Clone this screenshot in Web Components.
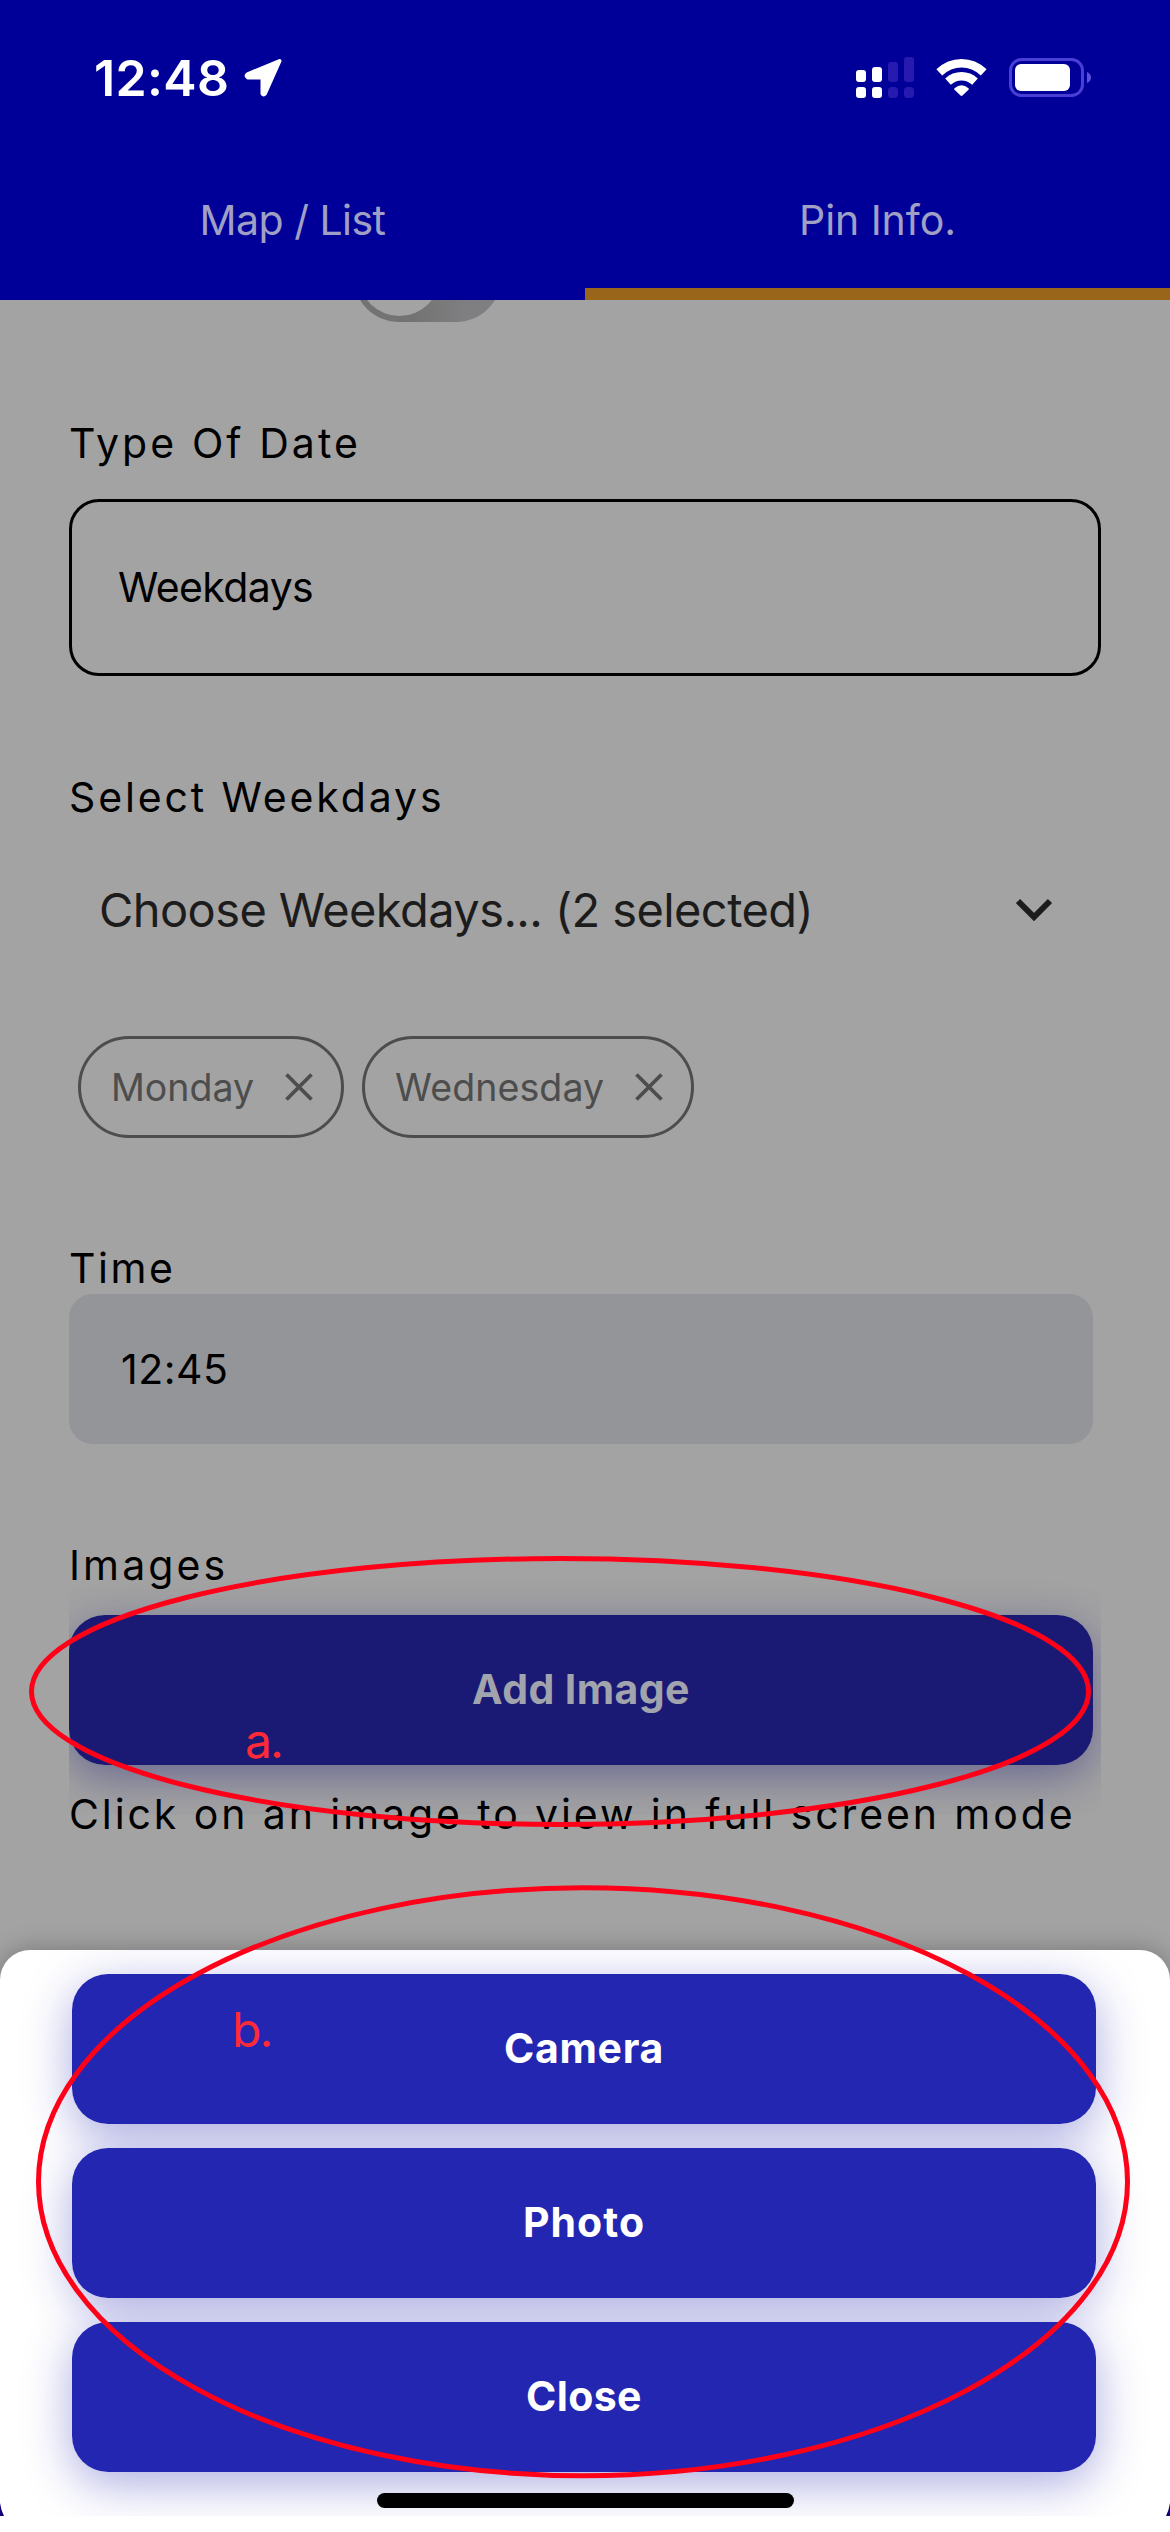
<!DOCTYPE html>
<html lang="en">
<head>
<meta charset="utf-8">
<title>Pin Info</title>
<style>
  html, body { margin: 0; padding: 0; }
  body { width: 1170px; height: 2532px; overflow: hidden; background: #fff; font-family: Inter, "Liberation Sans", sans-serif; }
</style>
</head>
<body>
<phone-screen>
  <app-header slot="header">
    <status-bar time="12:48"></status-bar>
    <tab-strip>
      <tab-item style="--ls:-.53px">Map / List</tab-item>
      <tab-item active style="--ls:-.08px">Pin Info.</tab-item>
    </tab-strip>
  </app-header>
  <pin-form>
    <toggle-switch></toggle-switch>
    <field-label style="margin-top:96px;--ls:3.08px">Type Of Date</field-label>
    <outlined-field style="margin-top:31px;--ls:-.6px">Weekdays</outlined-field>
    <field-label style="margin-top:96px;--ls:2.88px">Select Weekdays</field-label>
    <multi-select style="margin-top:47px">Choose Weekdays... (2 selected)</multi-select>
    <chip-list style="margin-top:87px">
      <chip-item>Monday</chip-item>
      <chip-item style="--ls:.1px">Wednesday</chip-item>
    </chip-list>
    <field-label style="margin-top:105px;--ls:2.56px">Time</field-label>
    <filled-field style="margin-top:1px">12:45</filled-field>
    <field-label style="margin-top:96px;--ls:3.1px">Images</field-label>
    <action-button dim style="margin-top:25px;--ls:.41px">Add Image</action-button>
    <field-label style="margin-top:24px;--ls:2.91px">Click on an image to view in full screen mode</field-label>
  </pin-form>
  <action-sheet slot="sheet">
    <action-button style="--ls:.68px">Camera</action-button>
    <action-button style="--ls:1.04px">Photo</action-button>
    <action-button style="--ls:.36px">Close</action-button>
  </action-sheet>
  <mark-up slot="notes"></mark-up>
</phone-screen>

<script>
const define = (name, html) => {
  const tpl = document.createElement('template');
  tpl.innerHTML = html;
  customElements.define(name, class extends HTMLElement {
    constructor() {
      super();
      this.attachShadow({ mode: 'open' }).append(tpl.content.cloneNode(true));
    }
    connectedCallback() {
      const t = this.shadowRoot.querySelector('[data-time]');
      if (t) t.textContent = this.getAttribute('time');
    }
  });
};

define('phone-screen', `
  <style>
    :host { display: flex; flex-direction: column; position: relative; width: 1170px; height: 2532px; background: #fff; overflow: hidden; }
    .app { display: flex; flex-direction: column; height: 2516px; background: #a3a3a3; overflow: hidden; }
  </style>
  <div class="app"><slot name="header"></slot><slot></slot></div>
  <slot name="sheet"></slot><slot name="notes"></slot>`);

define('app-header', `
  <style>:host { display: flex; flex-direction: column; height: 300px; flex: none; background: #000099; }</style>
  <slot></slot>`);

define('status-bar', `
  <style>
    :host { display: flex; align-items: center; justify-content: space-between; height: 153px; padding: 3px 79px 0 94px; box-sizing: border-box; color: #fff; }
    .left { display: flex; align-items: center; gap: 14px; }
    .time { font-size: 50px; font-weight: 600; letter-spacing: .37px; line-height: 60px; }
    svg { display: block; }
  </style>
  <div class="left">
    <span class="time" data-time></span>
    <svg width="42" height="42" viewBox="0 0 42 42"><path d="M4.500 17.300 36.500 4 22 36.500Q20.500 38.500 19.500 36.500V20.500H5Q2.500 19 4.500 17.300Z" fill="#fff" stroke="#fff" stroke-width="4" stroke-linejoin="round"/></svg>
  </div>
  <svg width="236" height="44" viewBox="855 56 236 44">
    <g fill="#fff"><rect x="856" y="70" width="10" height="12" rx="3"/><rect x="872" y="67" width="10" height="15" rx="3"/><rect x="856" y="87" width="10" height="11" rx="3"/><rect x="872" y="87" width="10" height="11" rx="3"/></g>
    <g fill="#261bae"><rect x="888" y="62" width="10" height="20" rx="3"/><rect x="904" y="57" width="10" height="25" rx="3"/><rect x="888" y="87" width="10" height="11" rx="4"/><rect x="904" y="87" width="10" height="11" rx="4"/></g>
    <g fill="none" stroke="#fff" stroke-width="8.500"><path d="M939.300 72.400Q949 63.300 961.500 63.300T983.700 72.400"/><path d="M948 81.600Q954 76.300 961.500 76.300T975 81.600"/></g>
    <path d="M954.500 88.200Q961.500 82.400 968.500 88.200Q969.200 89 968.500 89.700L962.500 95.600Q961.500 96.300 960.500 95.600L954.500 89.700Q953.800 89 954.500 88.200Z" fill="#fff"/>
    <rect x="1010.500" y="59.500" width="72" height="36" rx="11" fill="none" stroke="#4a3fd4" stroke-width="3"/>
    <rect x="1015" y="64" width="55" height="27" rx="6" fill="#fff"/>
    <path d="M1087 72Q1091 74 1091 77.500T1087 83Z" fill="#5b52dc"/>
  </svg>`);

define('tab-strip', `
  <style>:host { display: flex; height: 147px; }</style>
  <slot></slot>`);

define('tab-item', `
  <style>
    :host { display: flex; align-items: center; justify-content: center; flex: 1; box-sizing: border-box; padding-bottom: 1px; border-bottom: 12px solid transparent; font-size: 41px; letter-spacing: var(--ls); color: #a0a0c4; }
    :host([active]) { border-bottom-color: #99651b; }
  </style>
  <slot></slot>`);

define('pin-form', `
  <style>:host { display: flex; flex-direction: column; align-items: flex-start; padding: 0 69px; }</style>
  <slot></slot>`);

define('toggle-switch', `
  <style>
    :host { display: flex; align-items: flex-end; width: 151px; height: 22px; margin-left: 284px; overflow: hidden; }
    .track { display: flex; align-items: center; flex: none; width: 149px; height: 93px; border-radius: 47px; background: linear-gradient(90deg, #737373 40%, #7f7f81 75%); padding-left: 6px; box-sizing: border-box; }
    .thumb { width: 81px; height: 81px; border-radius: 50%; background: #a3a3a3; }
  </style>
  <div class="track"><div class="thumb"></div></div>`);

define('field-label', `
  <style>:host { display: block; height: 50px; line-height: 50px; font-size: 41px; letter-spacing: var(--ls); color: #000; white-space: nowrap; }</style>
  <slot></slot>`);

define('outlined-field', `
  <style>:host { display: flex; align-items: center; box-sizing: border-box; width: 1032px; height: 177px; border: 3px solid #000; border-radius: 30px; padding: 0 0 1px 46px; font-size: 41px; letter-spacing: var(--ls); color: #000; }</style>
  <slot></slot>`);

define('multi-select', `
  <style>
    :host { display: flex; align-items: center; justify-content: space-between; box-sizing: border-box; width: 986px; height: 80px; padding-left: 30px; font-size: 47px; letter-spacing: -.58px; color: #1c1c1c; white-space: nowrap; }
    svg { display: block; margin-right: 2px; }
  </style>
  <slot></slot>
  <svg width="38" height="24" viewBox="0 0 38 24"><path d="M3 4 19 20 35 4" fill="none" stroke="#1c1c1c" stroke-width="6"/></svg>`);

define('chip-list', `
  <style>:host { display: flex; gap: 18px; padding-left: 9px; }</style>
  <slot></slot>`);

define('chip-item', `
  <style>
    :host { display: flex; align-items: center; gap: 31px; box-sizing: border-box; height: 102px; border: 3px solid #4d4d4d; border-radius: 51px; padding: 0 28px 0 30px; font-size: 37.5px; letter-spacing: var(--ls, 0); color: #4d4d4d; }
    svg { display: block; }
  </style>
  <span><slot></slot></span>
  <svg width="28" height="28" viewBox="0 0 28 28"><path d="M1.500 1.500 26.500 26.500M26.500 1.500 1.500 26.500" stroke="#4d4d4d" stroke-width="3.800"/></svg>`);

define('filled-field', `
  <style>:host { display: flex; align-items: center; box-sizing: border-box; width: 1024px; height: 150px; border-radius: 24px; padding-left: 52px; background: #939598; font-size: 41px; letter-spacing: .5px; color: #000; }</style>
  <slot></slot>`);

define('action-button', `
  <style>
    :host { display: flex; align-items: center; justify-content: center; position: relative; box-sizing: border-box; width: 1024px; height: 150px; padding-bottom: 2px; flex: none; border-radius: 36px; background: #2226b1; color: #fff; font-size: 41px; font-weight: 700; letter-spacing: var(--ls); }
    :host::before { content: ""; position: absolute; inset: 0; z-index: -1; border-radius: 36px; box-shadow: 0 12px 48px rgba(34,38,177,.38); }
    :host([dim]) { background: #1a1a75; color: #a1a3ad; clip-path: inset(-40px -8px -50px 0); }
    :host([dim])::before { box-shadow: 0 12px 44px rgba(40,36,125,.46); }
  </style>
  <slot></slot>`);

define('action-sheet', `
  <style>
    :host { display: block; position: absolute; left: 0; right: 0; top: 1950px; height: 566px; }
    .sheet { display: flex; flex-direction: column; align-items: center; box-sizing: border-box; height: 566px; padding: 24px 2px 0 0; gap: 24px; background: #fff; border-radius: 30px 30px 0 0; box-shadow: 0 0 26px rgba(0,0,0,.28); overflow: hidden; isolation: isolate; }
    .list { display: flex; flex-direction: column; gap: 24px; isolation: isolate; }
    .home { width: 417px; height: 15px; flex: none; border-radius: 8px; background: #000; margin: -3px 0 0 3px; position: relative; }
    .rim { position: absolute; left: 0; right: 0; bottom: 0; height: 13px; display: flex; justify-content: space-between; }
    :host::after { content: ""; position: absolute; left: 0; right: 0; top: 566px; height: 16px; background: #fff; }
  </style>
  <div class="sheet"><div class="list"><slot></slot></div><div class="home"></div></div>
  <div class="rim">
    <svg width="4" height="13" viewBox="0 0 4 13"><path d="M0 0Q1 7 4 13H0Z" fill="#10007a"/></svg>
    <svg width="4" height="13" viewBox="0 0 4 13"><path d="M4 0Q3 7 0 13H4Z" fill="#10007a"/></svg>
  </div>`);

define('mark-up', `
  <style>
    :host { display: block; position: absolute; inset: 0; }
    svg { position: absolute; inset: 0; }
    span { position: absolute; font-size: 48px; line-height: 58px; color: #ff2a37; letter-spacing: -2px; }
  </style>
  <svg width="1170" height="2532" viewBox="0 0 1170 2532" fill="none" stroke="#ff0019" stroke-width="5">
    <ellipse cx="560" cy="1691.500" rx="528.500" ry="133"/>
    <ellipse cx="583" cy="2181.700" rx="544.500" ry="294"/>
  </svg>
  <span style="left:245px;top:1712px">a.</span>
  <span style="left:232px;top:2001px">b.</span>`);
</script>
</body>
</html>
